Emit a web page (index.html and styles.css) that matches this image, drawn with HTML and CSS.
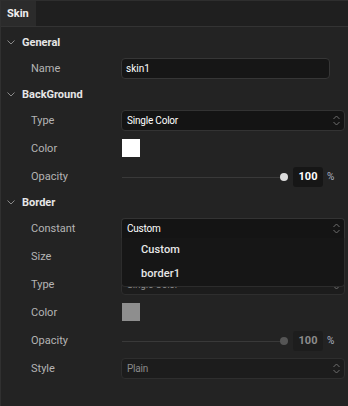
FILE: index.html
```html
<!DOCTYPE html>
<html lang="en">
<head>
  <meta charset="UTF-8">
  <meta name="viewport" content="width=device-width, initial-scale=1.0">
  <title>Skin</title>
  <link rel="stylesheet" href="styles.css">
</head>
<body>
  <div class="panel">
    <!-- tabs -->
    <div class="tabbar">
      <div class="tab">Skin</div>
    </div>

    <div class="content">
      <!-- General -->
      <div class="section-head">
        <svg class="caret" width="8" height="5" viewBox="0 0 8 5"><path d="M0.5 0.5 L4 4 L7.5 0.5" /></svg>
        <span>General</span>
      </div>
      <div class="row">
        <div class="label">Name</div>
        <div class="control"><div class="text-input">skin1</div></div>
      </div>

      <!-- BackGround -->
      <div class="section-head">
        <svg class="caret" width="8" height="5" viewBox="0 0 8 5"><path d="M0.5 0.5 L4 4 L7.5 0.5" /></svg>
        <span>BackGround</span>
      </div>
      <div class="row">
        <div class="label">Type</div>
        <div class="control">
          <div class="select">
            <span>Single Color</span>
            <svg class="updown" width="7" height="11" viewBox="0 0 7 11"><path d="M0.5 4 L3.5 1 L6.5 4 M0.5 7 L3.5 10 L6.5 7" /></svg>
          </div>
        </div>
      </div>
      <div class="row">
        <div class="label">Color</div>
        <div class="control"><div class="swatch"></div></div>
      </div>
      <div class="row">
        <div class="label">Opacity</div>
        <div class="control slider">
          <div class="track"><div class="knob"></div></div>
          <div class="num">100</div>
          <div class="pct">%</div>
        </div>
      </div>

      <!-- Border -->
      <div class="section-head">
        <svg class="caret" width="8" height="5" viewBox="0 0 8 5"><path d="M0.5 0.5 L4 4 L7.5 0.5" /></svg>
        <span>Border</span>
      </div>
      <div class="row">
        <div class="label">Constant</div>
        <div class="control">
          <div class="select open">
            <span>Custom</span>
            <svg class="updown" width="7" height="11" viewBox="0 0 7 11"><path d="M0.5 4 L3.5 1 L6.5 4 M0.5 7 L3.5 10 L6.5 7" /></svg>
            <div class="menu">
              <div class="item">Custom</div>
              <div class="item">border1</div>
            </div>
          </div>
        </div>
      </div>
      <div class="row">
        <div class="label">Size</div>
        <div class="control"></div>
      </div>
      <div class="row">
        <div class="label">Type</div>
        <div class="control">
          <div class="select dim">
            <span>Single Color</span>
            <svg class="updown" width="7" height="11" viewBox="0 0 7 11"><path d="M0.5 4 L3.5 1 L6.5 4 M0.5 7 L3.5 10 L6.5 7" /></svg>
          </div>
        </div>
      </div>
      <div class="row">
        <div class="label">Color</div>
        <div class="control"><div class="swatch gray"></div></div>
      </div>
      <div class="row">
        <div class="label">Opacity</div>
        <div class="control slider dim">
          <div class="track"><div class="knob"></div></div>
          <div class="num">100</div>
          <div class="pct">%</div>
        </div>
      </div>
      <div class="row">
        <div class="label">Style</div>
        <div class="control">
          <div class="select dim">
            <span>Plain</span>
            <svg class="updown" width="7" height="11" viewBox="0 0 7 11"><path d="M0.5 4 L3.5 1 L6.5 4 M0.5 7 L3.5 10 L6.5 7" /></svg>
          </div>
        </div>
      </div>
    </div>
  </div>
</body>
</html>
```

FILE: styles.css
```css
/* base */
body {
  margin: 0;
  background-color: #232323;
  font-family: Roboto, "Liberation Sans", sans-serif;
  font-size: 11px;
  color: #b4b4b4;
}

.panel {
  width: 348px;
  height: 406px;
  box-sizing: border-box;
  border-left: 1px solid #303030;
  border-top: 1px solid #2e2e2e;
  background-color: #232323;
  overflow: hidden;
}

/* tab bar */
.tabbar {
  height: 25px;
  display: flex;
  background-color: #1f1f1f;
  border-bottom: 1px solid #333;
}
.tab {
  padding: 0 7px 0 6px;
  line-height: 25px;
  background-color: #2b2b2b;
  color: #f0f0f0;
  font-weight: 700;
  font-size: 11px;
}

.content {
  padding-top: 3px;
}

/* section headers */
.section-head {
  height: 24px;
  display: flex;
  align-items: center;
  color: #e6e6e6;
  font-weight: 700;
}
.caret {
  margin: 0 7px 0 6px;
  fill: none;
  stroke: #8a8a8a;
  stroke-width: 1;
}

/* property rows */
.row {
  height: 28px;
  display: flex;
  align-items: center;
}
.label {
  width: 90px;
  padding-left: 30px;
}
.control {
  flex: 1;
  padding-right: 3px;
  display: flex;
  align-items: center;
}

.text-input {
  width: 203px;
  height: 19px;
  box-sizing: content-box;
  background-color: #161616;
  border: 1px solid #363636;
  border-radius: 4px;
  color: #fff;
  font-size: 10px;
  line-height: 19px;
  padding-left: 4px;
}

.select {
  position: relative;
  flex: 1;
  height: 19px;
  background-color: #141414;
  border: 1px solid #333;
  border-radius: 4px;
  display: flex;
  align-items: center;
  justify-content: space-between;
  padding: 0 4px 0 5px;
  color: #fff;
  font-size: 10px;
  letter-spacing: -0.2px;
}
.select.open {
  border-radius: 4px 4px 0 0;
  border-bottom-color: #2c2c2c;
}
.select.dim {
  background-color: #1c1c1c;
  border-color: #2e2e2e;
  color: #8a8a8a;
}
.updown {
  fill: none;
  stroke: #6e6e6e;
  stroke-width: 1;
}

/* dropdown menu */
.menu {
  position: absolute;
  left: -1px;
  right: -1px;
  top: 19px;
  background-color: #161616;
  border: 1px solid #2c2c2c;
  border-top: none;
  border-radius: 0 0 4px 4px;
  z-index: 2;
}
.item {
  height: 24px;
  line-height: 24px;
  padding-left: 19px;
  color: #e8e8e8;
  font-size: 11px;
  font-weight: 500;
  letter-spacing: 0.1px;
}

.swatch {
  width: 18px;
  height: 18px;
  margin-left: 1px;
  background-color: #fff;
}
.swatch.gray {
  background-color: #8e8e8e;
}

/* slider */
.slider .track {
  position: relative;
  width: 162px;
  height: 1px;
  margin-left: 1px;
  margin-top: 3px;
  background-color: #393939;
}
.knob {
  position: absolute;
  right: -4px;
  top: -4px;
  width: 8px;
  height: 8px;
  border-radius: 50%;
  background-color: #dcdcdc;
}
.num {
  width: 30px;
  height: 20px;
  margin-left: 9px;
  margin-top: 1px;
  background-color: #161616;
  border-radius: 3px;
  color: #fff;
  font-weight: 700;
  font-size: 11px;
  line-height: 20px;
  text-align: center;
}
.pct {
  margin-left: 4px;
  color: #aab4c2;
  font-size: 10px;
  margin-top: 1px;
}
.slider.dim .knob {
  background-color: #555;
}
.slider.dim .num {
  background-color: #1d1d1d;
  color: #8c8c8c;
}
```
